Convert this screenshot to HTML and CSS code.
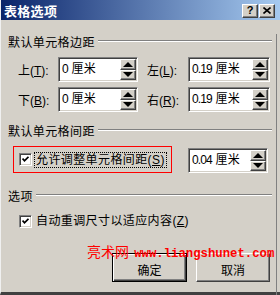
FILE: index.html
```html
<!DOCTYPE html>
<html lang="zh-CN">
<head>
    <meta charset="UTF-8">
    <title>表格选项</title>
    <link rel="stylesheet" href="styles.css">
</head>
<body>
    <div class="window">
        <div class="titlebar">
            <span class="title">表格选项</span>
            <div class="caption-btns">
                <span class="cap-btn">?</span>
                <span class="cap-btn">
                    <svg width="8" height="7" viewBox="0 0 8 7"><path d="M0.5 0.5 L7.5 6.5 M7.5 0.5 L0.5 6.5" stroke="#000" stroke-width="1.6"/></svg>
                </span>
            </div>
        </div>

        <div class="content">
            <!-- 默认单元格边距 -->
            <div class="group-title">默认单元格边距</div>
            <div class="margin-grid">
                <label>上(<u>T</u>):</label>
                <div class="spin"><span class="val"><span class="num">0</span> 厘米</span><div class="spin-btns"><span class="up"></span><span class="down"></span></div></div>
                <label class="right">左(<u>L</u>):</label>
                <div class="spin"><span class="val"><span class="num">0.19</span> 厘米</span><div class="spin-btns"><span class="up"></span><span class="down"></span></div></div>

                <label>下(<u>B</u>):</label>
                <div class="spin"><span class="val"><span class="num">0</span> 厘米</span><div class="spin-btns"><span class="up"></span><span class="down"></span></div></div>
                <label class="right">右(<u>R</u>):</label>
                <div class="spin"><span class="val"><span class="num">0.19</span> 厘米</span><div class="spin-btns"><span class="up"></span><span class="down"></span></div></div>
            </div>

            <!-- 默认单元格间距 -->
            <div class="group-title gt-2">默认单元格间距</div>
            <div class="spacing-row">
                <div class="highlight">
                    <span class="checkbox"><svg width="7" height="7" viewBox="0 0 7 7"><path d="M0.5 2.5 L2.5 4.8 L6.5 0.8" fill="none" stroke="#000" stroke-width="1.8"/></svg></span>
                    <span class="check-label focused">允许调整单元格间距(<u>S</u>)</span>
                </div>
                <div class="spin spin-sm"><span class="val"><span class="num">0.04</span> 厘米</span><div class="spin-btns"><span class="up"></span><span class="down"></span></div></div>
            </div>

            <!-- 选项 -->
            <div class="group-title gt-3">选项</div>
            <div class="check-row">
                <span class="checkbox"><svg width="7" height="7" viewBox="0 0 7 7"><path d="M0.5 2.5 L2.5 4.8 L6.5 0.8" fill="none" stroke="#000" stroke-width="1.8"/></svg></span>
                <span class="check-label">自动重调尺寸以适应内容(<u>Z</u>)</span>
            </div>

            <div class="buttons">
                <button class="btn default">确定</button>
                <button class="btn">取消</button>
            </div>
        </div>

        <div class="watermark">亮术网 <span class="url">www.liangshunet.com</span></div>
    </div>
</body>
</html>
```

FILE: styles.css
```css
:root {
    --face: #d4d0c8;
    --shadow: #808080;
    --dark: #404040;
    --light: #ffffff;
}

* {
    box-sizing: border-box;
    margin: 0;
    padding: 0;
}

body {
    width: 280px;
    height: 295px;
    overflow: hidden;
    background: var(--face);
    font-family: "Liberation Sans", "Noto Sans CJK SC", sans-serif;
    font-size: 12px;
    color: #000;
}

.window {
    position: relative;
    height: 295px;
    border-left: 1px solid #f0f0f0;
    border-bottom: 3px solid var(--dark);
}

/* 标题栏 */
.titlebar {
    height: 20px;
    display: flex;
    align-items: center;
    padding: 0 5px 0 3px;
    background: linear-gradient(to right, #0a246a, #a6caf0);
    color: #fff;
}

.title {
    font-family: "Noto Sans CJK SC", sans-serif;
    font-size: 13px;
    font-weight: bold;
    letter-spacing: 0.3px;
}

.caption-btns {
    margin-left: auto;
    display: flex;
    gap: 1px;
    padding-top: 1px;
}

.cap-btn {
    width: 16px;
    height: 14px;
    display: flex;
    align-items: center;
    justify-content: center;
    background: var(--face);
    border: 1px solid;
    border-color: var(--light) var(--dark) var(--dark) var(--light);
    box-shadow: inset -1px -1px var(--shadow);
    color: #000;
    font-family: "Liberation Sans", sans-serif;
    font-weight: bold;
    font-size: 11px;
    line-height: 1;
}

/* 内容 */
.content {
    height: 272px;
    margin-right: 3px;
    border-right: 1px solid var(--shadow);
    padding: 0 6px 0 0;
}

.group-title {
    display: flex;
    align-items: center;
    height: 14px;
    margin-top: 14px;
    padding-left: 7px;
    letter-spacing: 0.4px;
    white-space: nowrap;
}

.group-title::after {
    content: "";
    flex: 1;
    margin-left: 3px;
    margin-right: -2px;
    border-top: 1px solid var(--shadow);
    border-bottom: 1px solid var(--light);
}

.gt-2 {
    margin-top: 11px;
}

.gt-3 {
    margin-top: 15px;
}

.margin-grid {
    display: grid;
    grid-template-columns: 40px 80px 50px 82px;
    grid-auto-rows: 25px;
    row-gap: 5px;
    margin-top: 9px;
    margin-left: 17px;
    align-items: center;
}

.margin-grid label.right {
    padding-left: 9px;
}

u {
    text-decoration: underline;
    text-underline-offset: 1px;
}

/* 数值框 */
.spin {
    display: flex;
    height: 25px;
    padding: 1px;
    background: #fff;
    border: 1px solid;
    border-color: var(--shadow) var(--light) var(--light) var(--shadow);
    box-shadow: inset 1px 1px var(--dark), inset -1px -1px var(--face);
}

.val {
    flex: 1;
    line-height: 21px;
    padding-left: 2px;
    white-space: nowrap;
    letter-spacing: 0.3px;
}

.num {
    letter-spacing: -0.9px;
}

.spin-btns {
    width: 16px;
    display: flex;
    flex-direction: column;
}

.spin-btns span {
    flex: 1;
    display: flex;
    align-items: center;
    justify-content: center;
    background: var(--face);
    border: 1px solid;
    border-color: var(--light) var(--dark) var(--dark) var(--light);
    box-shadow: inset -1px -1px var(--shadow);
}

.spin-btns .up::after,
.spin-btns .down::after {
    content: "";
    width: 0;
    height: 0;
    border-left: 5px solid transparent;
    border-right: 5px solid transparent;
}

.spin-btns .up::after {
    border-bottom: 5px solid #000;
}

.spin-btns .down::after {
    border-top: 5px solid #000;
}

/* 间距行 */
.spacing-row {
    display: flex;
    align-items: center;
    height: 27px;
    margin-top: 9px;
    padding-left: 12px;
}

.highlight {
    width: 159px;
    height: 27px;
    display: flex;
    align-items: center;
    padding-left: 5px;
    border: 1px solid #f00;
}

.spin-sm {
    width: 80px;
    margin-left: 16px;
    margin-top: 2px;
}

.checkbox {
    width: 13px;
    height: 13px;
    display: flex;
    align-items: center;
    justify-content: center;
    background: #fff;
    border: 1px solid;
    border-color: var(--shadow) var(--light) var(--light) var(--shadow);
    box-shadow: inset 1px 1px var(--dark), inset -1px -1px var(--face);
}

.check-label {
    margin-left: 2px;
    padding: 0 1px;
    height: 16px;
    line-height: 15px;
    border: 1px solid transparent;
    letter-spacing: 0.4px;
    white-space: nowrap;
}

.check-label.focused {
    border: 1px dotted #000;
}

.check-row {
    display: flex;
    align-items: center;
    height: 16px;
    margin-top: 11px;
    padding-left: 18px;
}

/* 按钮 */
.buttons {
    display: flex;
    justify-content: flex-end;
    gap: 9px;
    margin-top: 24px;
}

.btn {
    width: 74px;
    height: 29px;
    padding-top: 3px;
    background: var(--face);
    border: 1px solid;
    border-color: var(--light) var(--dark) var(--dark) var(--light);
    box-shadow: inset -1px -1px var(--shadow);
    font-family: "Noto Sans CJK SC", sans-serif;
    font-size: 12px;
    color: #000;
}

.btn.default {
    width: 75px;
    border-color: #000;
    box-shadow: inset 1px 1px var(--light), inset -1px -1px var(--dark), inset -2px -2px var(--shadow);
}

.watermark {
    position: absolute;
    left: 86px;
    top: 244px;
    color: #f00;
    font-family: "Noto Sans CJK SC", sans-serif;
    font-size: 14px;
    line-height: 15px;
    white-space: nowrap;
}

.watermark .url {
    font-family: "Liberation Mono", monospace;
    font-size: 12.3px;
    font-weight: bold;
    margin-left: 2px;
}
```
